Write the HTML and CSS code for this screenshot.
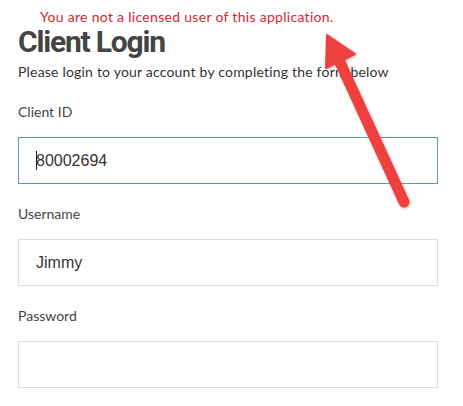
FILE: index.html
```html
<!DOCTYPE html>
<html>
<head>
<meta charset="utf-8">
<link rel="stylesheet" href="styles.css">
</head>
<body>
<div class="page">
  <p class="error">You are not a licensed user of this application.</p>
  <h1 class="title">Client Login</h1>
  <p class="intro">Please login to your account by completing the form below</p>
  <div class="field">
    <label class="label">Client ID</label>
    <div class="input focused"><span class="caret"></span>80002694</div>
  </div>
  <div class="field">
    <label class="label">Username</label>
    <div class="input">Jimmy</div>
  </div>
  <div class="field">
    <label class="label">Password</label>
    <div class="input"></div>
  </div>
  <svg class="arrow" width="463" height="406" viewBox="0 0 463 406">
    <defs>
      <filter id="sh" x="-20%" y="-20%" width="140%" height="140%">
        <feDropShadow dx="1" dy="1" stdDeviation="1.5" flood-color="#000" flood-opacity="0.25"/>
      </filter>
    </defs>
    <g filter="url(#sh)" fill="#ef3f3f" stroke="#ef3f3f">
      <line x1="338" y1="58" x2="404" y2="202" stroke-width="11" stroke-linecap="round"/>
      <polygon points="327,35 326,68 355,54" stroke-width="2" stroke-linejoin="round"/>
    </g>
  </svg>
</div>
</body>
</html>
```
FILE: styles.css
```css
html, body {
  margin: 0;
  padding: 0;
  background: #fff;
}
.page {
  position: relative;
  width: 463px;
  height: 406px;
  box-sizing: border-box;
  padding: 8px 25px 0 18px;
  font-family: Lato, "Liberation Sans", sans-serif;
  overflow: hidden;
}
.error {
  margin: 0 0 0 22px;
  font-size: 14px;
  letter-spacing: 0.3px;
  line-height: 17px;
  color: #d9262b;
}
.title {
  margin: 1px 0 5px 0;
  font-family: Roboto, Lato, sans-serif;
  font-size: 30px;
  letter-spacing: -1.2px;
  line-height: 31px;
  font-weight: 700;
  color: #444;
}
.intro {
  margin: 0 0 20px 0;
  font-size: 14px;
  letter-spacing: 0.2px;
  line-height: 20px;
  color: #333;
}
.field {
  margin-bottom: 20px;
}
.label {
  display: block;
  font-size: 14px;
  line-height: 20px;
  color: #444;
  margin-bottom: 15px;
}
.input {
  box-sizing: border-box;
  height: 47px;
  width: 420px;
  border: 1px solid #dcdcdc;
  padding-left: 17px;
  display: flex;
  align-items: center;
  font-family: "Liberation Sans", Arial, sans-serif;
  font-size: 16px;
  color: #333;
}
.input.focused {
  border-color: #5a97bb;
}
.caret {
  display: inline-block;
  width: 1px;
  height: 19px;
  background: #222;
  margin-right: -1px;
}
.arrow {
  position: absolute;
  left: 0;
  top: 0;
  pointer-events: none;
}
```
